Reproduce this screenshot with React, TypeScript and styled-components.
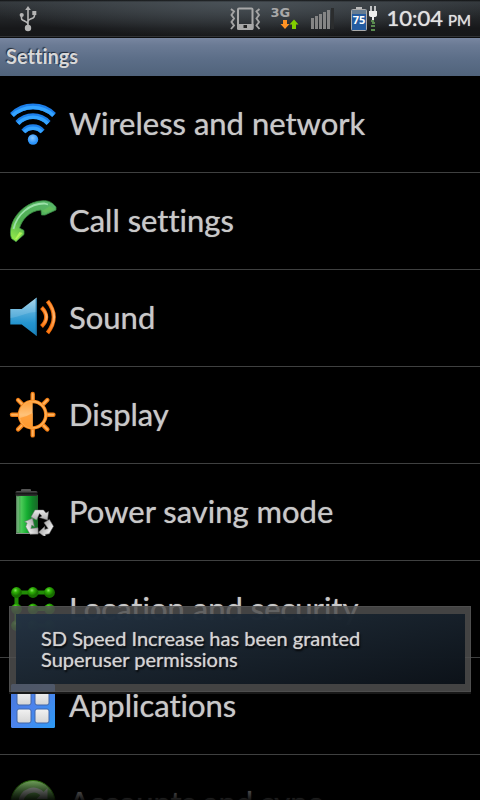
import React from "react";
import styled, { createGlobalStyle } from "styled-components";

const GlobalStyle = createGlobalStyle`
  * { box-sizing: border-box; }
  html, body { margin: 0; background: #000; }
  body {
    font-family: Lato, "Open Sans", sans-serif;
    font-variant-ligatures: none;
    color: #c9c9c9;
  }
`;

const Screen = styled.div`
  position: relative;
  display: flex;
  flex-direction: column;
  height: 100vh;
  overflow: hidden;
  background: #000;
`;

const StatusBar = styled.div`
  display: flex;
  flex: none;
  align-items: center;
  justify-content: space-between;
  height: 38px;
  padding: 0 9px 0 16px;
  background:
    linear-gradient(#0c0d0e, #0c0d0e) bottom / 100% 1px no-repeat,
    linear-gradient(#303234, #303234) 0 36px / 100% 1px no-repeat,
    linear-gradient(rgba(0, 0, 0, 0.75), rgba(0, 0, 0, 0)) top / 100% 2px no-repeat,
    radial-gradient(ellipse 56% 100% at 50% 0, #4b5359 0%, rgba(75, 83, 89, 0) 100%),
    linear-gradient(#34393d, #17181a 75%, #161718);
`;

const StatusIcons = styled.div`
  display: flex;
  align-items: center;
`;

const Network = styled.div`
  display: flex;
  flex-direction: column;
  width: 28px;
  height: 26px;
  margin: 0 11px 0 10px;
  color: #a8a8a8;
  font: bold 13px/13px "DejaVu Sans", sans-serif;

  svg { align-self: flex-end; }
`;

const Battery = styled.svg`
  margin: 0 10px 0 14px;
  font: bold 11px "Open Sans", sans-serif;
`;

const Clock = styled.time`
  color: #e2e2e2;
  font-size: 22px;
  line-height: 38px;
  text-shadow: 0 0 1px #ccc;
  white-space: nowrap;
`;

const Meridiem = styled.span`
  margin-left: 5px;
  font-size: 15px;
`;

const TitleBar = styled.h1`
  flex: none;
  height: 38px;
  margin: 0;
  padding: 0 6px;
  background: linear-gradient(#7886a0, #6a7a94 20%, #5c6e88 55%, #50637b);
  color: #d8d8d8;
  font-size: 20px;
  font-weight: 700;
  line-height: 37px;
  text-shadow: -1px -1px 1px #222b38;
`;

const List = styled.ul`
  flex: 1;
  min-height: 0;
  margin: 0;
  padding: 0;
  overflow: hidden;
  list-style: none;
`;

const Item = styled.li`
  border-bottom: 1px solid #3f4040;
`;

const ItemButton = styled.button`
  display: flex;
  align-items: center;
  gap: 12px;
  width: 100%;
  height: 96px;
  padding: 0 9px;
  border: 0;
  background: transparent;
  color: inherit;
  font: inherit;
  font-size: 31px;
  text-align: left;
  white-space: nowrap;
  cursor: pointer;

  svg { flex: none; }
`;

const ItemLabel = styled.span`
  padding-bottom: 2px;
  text-shadow: 0 0 1px #999;
`;

const BottomFade = styled.div`
  position: absolute;
  right: 0;
  bottom: 0;
  left: 0;
  height: 30px;
  background: linear-gradient(rgba(0, 0, 0, 0), rgba(0, 0, 0, 0.9));
  pointer-events: none;
`;

const Toast = styled.div`
  position: absolute;
  right: 9px;
  bottom: 108px;
  left: 9px;
  padding: 8px 6px 8px 7px;
  background: rgba(80, 80, 80, 0.84);
  box-shadow: inset 0 0 0 1px rgba(90, 90, 90, 0.5), 0 2px 0 #181818;
`;

const ToastBody = styled.p`
  margin: 0;
  padding: 14px 25px;
  background: linear-gradient(168deg, rgba(33, 49, 66, 0.92), rgba(23, 34, 45, 0.94) 45%, rgba(10, 16, 23, 0.96));
  color: #d4d4d4;
  font-size: 20px;
  line-height: 21px;
  text-shadow: 0 0 1px #aaa, 1px 2px 2px #000;
`;

const Icon = ({ children }: { children: React.ReactNode }) => (
  <svg width="48" height="48" viewBox="0 0 48 48" aria-hidden="true">
    {children}
  </svg>
);

const Gradient = ({ id, stops, flat }: { id: string; stops: string[]; flat?: boolean }) => (
  <linearGradient id={id} x1="0" y1="0" x2={flat ? "1" : "0"} y2={flat ? "0" : "1"}>
    {stops.map((color, i) => (
      <stop key={i} offset={i / (stops.length - 1)} stopColor={color} />
    ))}
  </linearGradient>
);

const WifiIcon = () => (
  <Icon>
    <defs>
      <radialGradient id="wifiDot" cx=".45" cy=".35">
        <stop offset="0" stopColor="#8cc8ff" />
        <stop offset="1" stopColor="#2b94fb" />
      </radialGradient>
    </defs>
    <g fill="none" stroke="#1c7eea" strokeWidth="5.600">
      <path d="M3 15A30 30 0 0 1 45 15" />
      <path d="M8.500 23A21 21 0 0 1 39.500 23" />
      <path d="M14.500 31.500A12.500 12.500 0 0 1 33.500 31.500" />
    </g>
    <g fill="none" stroke="#34a3ff" strokeWidth="3.500">
      <path d="M3.500 15.500A30 30 0 0 1 44.500 15.500" />
      <path d="M9 23.500A21 21 0 0 1 39 23.500" />
      <path d="M15 32A12.500 12.500 0 0 1 33 32" />
    </g>
    <circle cx="24" cy="39.500" r="5.200" fill="url(#wifiDot)" />
  </Icon>
);

const CallIcon = () => (
  <Icon>
    <defs>
      <linearGradient id="call" x1=".8" y1="0" x2=".1" y2="1">
        <stop offset="0" stopColor="#57b569" />
        <stop offset=".6" stopColor="#4fae50" />
        <stop offset="1" stopColor="#94ec4a" />
      </linearGradient>
    </defs>
    <path
      d="M7 44.700L15 37.500V33.500L10.500 31C13 23 20 14 32 13L32.500 18L36 18L47 13V10C43 5 39 3.500 34 3.700C20 4 7 15 3 27C1 33 1 38 2.500 41.500Z"
      fill="url(#call)"
      stroke="#3b8c43"
      strokeWidth=".8"
    />
    <path d="M4.500 32C8 17 21 6.500 35 6.500L39 7.500" fill="none" stroke="#9be0a8" strokeWidth="1.800" />
    <path d="M6 42L10.500 35L13.500 36L7.500 42.500Z" fill="#b2f25a" />
    <path d="M33 14L36.500 16L45.500 12L41 9Z" fill="#62bd5c" />
  </Icon>
);

const SoundIcon = () => (
  <Icon>
    <defs>
      <Gradient id="speaker" stops={["#9fd0e6", "#5ab0dc", "#2494cf", "#1a84bd"]} />
      <Gradient id="wave" stops={["#ff8a2c", "#ffb873", "#ff7810"]} />
    </defs>
    <path d="M1.300 15H12.700L27.700 3.500V42L12.700 30.500H1.300Z" fill="url(#speaker)" />
    <path d="M1.300 15H12.700L27.700 3.500V18C18 18 10 23 1.300 24Z" fill="#fff" opacity=".14" />
    <path d="M27.200 4.500V41.500" stroke="#1b6f9f" />
    <g fill="none" stroke="#ef6c08" strokeWidth="4">
      <path d="M32.500 13.500Q42 23 32.500 32.500" />
      <path d="M38.500 7Q51 23 38.500 39" />
    </g>
    <g fill="none" stroke="url(#wave)" strokeWidth="2.200">
      <path d="M33 14Q42 23 33 32" />
      <path d="M39 7.500Q51 23 39 38.500" />
    </g>
  </Icon>
);

const DisplayIcon = () => (
  <Icon>
    <defs>
      <Gradient id="sun" stops={["#ffa03a", "#ffc27a", "#ff9b2e"]} />
    </defs>
    {[0, 45, 90, 135, 180, 225, 270, 315].map((angle) => (
      <g key={angle} transform={`rotate(${angle} 23.700 23.700)`} strokeLinecap="round">
        <path d="M23.700 10V3" stroke="#f07c12" strokeWidth="4.400" />
        <path d="M23.700 10V3" stroke="#ffb25c" strokeWidth="2" />
      </g>
    ))}
    <circle cx="23.700" cy="23.700" r="13.200" fill="#000" stroke="#f58318" strokeWidth="3.500" />
    <circle cx="23.700" cy="23.700" r="13.200" fill="none" stroke="#ffae52" strokeWidth="1.800" />
    <path d="M23.700 10.500A13.200 13.200 0 0 0 23.700 37Z" fill="url(#sun)" />
    <path d="M11 27A13 13 0 0 0 23.700 37V22Q17 26 11 27Z" fill="#ff972c" opacity=".75" />
  </Icon>
);

const PowerIcon = () => (
  <Icon>
    <defs>
      <Gradient id="cell" flat stops={["#577c5b", "#49c956", "#16ae32", "#108528", "#1b6428"]} />
      <Gradient id="cap" stops={["#555", "#161616", "#333"]} />
      <Gradient id="arrow" stops={["#eee", "#aaa"]} />
    </defs>
    <rect x="12" y="1" width="10" height="4" rx="1" fill="#555" />
    <rect x="7" y="7" width="22" height="39" fill="url(#cell)" />
    <path d="M9 9V44" stroke="#91d69a" opacity=".7" />
    <path d="M7 45.500H29" stroke="#869088" />
    <rect x="6.500" y="3" width="22" height="5" rx="1.500" fill="url(#cap)" />
    {[0, 120, 240].map((angle) => (
      <path
        key={angle}
        transform={`translate(30.500 35.500) rotate(${angle})`}
        d="M-8.500 -6.500L-4.500 -13.500H4L6.500 -10.500L9 -12L8 -3.500L0 -6L2.500 -7.500L0 -10L-3 -3.500Z"
        fill="url(#arrow)"
        stroke="#777"
        strokeWidth=".5"
      />
    ))}
  </Icon>
);

const LocationIcon = () => (
  <Icon>
    <defs>
      <radialGradient id="node" cx=".4" cy=".3">
        <stop offset="0" stopColor="#86e55e" />
        <stop offset=".4" stopColor="#30b307" />
        <stop offset="1" stopColor="#176e00" />
      </radialGradient>
    </defs>
    <path d="M40.500 7.500H7.500V40.500M24 24H40.500M24 40.500H40.500" fill="none" stroke="#218d06" strokeWidth="4" />
    {[7.5, 24, 40.5].map((cy) =>
      [7.5, 24, 40.5].map((cx) => <circle key={`${cx}-${cy}`} cx={cx} cy={cy} r="5.400" fill="url(#node)" />)
    )}
  </Icon>
);

const ApplicationsIcon = () => (
  <Icon>
    <defs>
      <linearGradient id="apps" x1="0" y1="0" x2="1" y2="1">
        <stop offset="0" stopColor="#4676d8" />
        <stop offset=".5" stopColor="#4c83ec" />
        <stop offset="1" stopColor="#2c9bf5" />
      </linearGradient>
      <Gradient id="tile" stops={["#f2f2f2", "#d5d5d5"]} />
    </defs>
    <rect x="2" y="2" width="44" height="44" rx="1.500" fill="url(#apps)" />
    {[9, 27].map((y) =>
      [8, 26].map((x) => (
        <rect key={`${x}-${y}`} x={x} y={y} width="14" height="14" rx="2" fill="url(#tile)" stroke="#4167aa" />
      ))
    )}
  </Icon>
);

const SyncIcon = () => (
  <Icon>
    <defs>
      <Gradient id="sync" stops={["#a5ec85", "#549a45", "#256c16"]} />
    </defs>
    <circle cx="24" cy="23.500" r="22" fill="url(#sync)" stroke="#3d9b12" />
    <path d="M12 23A12.500 12.500 0 0 1 34 15.500M36 24A12.500 12.500 0 0 1 14 31.500" fill="none" stroke="#d5ddd3" strokeWidth="5" />
    <path d="M38.500 9V20H27.500ZM9.500 38V27H20.500Z" fill="#d5ddd3" />
  </Icon>
);

const UsbIcon = () => (
  <svg width="24" height="26" viewBox="0 0 24 26" aria-label="USB connected" role="img">
    <path
      d="M12 3V22M12 18.500Q12 16.500 9.500 15.500L6.500 14Q5.500 13.500 5.500 12V9M12 15.500Q12 14 14.500 13L17 12Q18.500 11 18.500 9.500V8"
      fill="none"
      stroke="#b5b5b5"
      strokeWidth="1.600"
    />
    <path d="M12 0L14.800 4H9.200Z" fill="#b5b5b5" />
    <circle cx="5.700" cy="9" r="2.100" fill="#b5b5b5" />
    <rect x="16.300" y="5" width="4" height="4" fill="#b5b5b5" />
    <circle cx="12" cy="22" r="3.200" fill="#b5b5b5" />
  </svg>
);

const VibrateIcon = () => (
  <svg width="31" height="24" viewBox="0 0 31 24" aria-label="Vibrate" role="img">
    <rect x="8" y="1.500" width="14.500" height="20" rx="1" fill="none" stroke="#a8a8a8" strokeWidth="2" />
    <path d="M7 17H23.500V21.500Q23.500 23 22 23H8.500Q7 23 7 21.500Z" fill="#a8a8a8" />
    <rect x="13.500" y="18" width="3.500" height="3" fill="#222" />
    <path
      d="M1 2L4 4.500L1.500 8L4 11.500L1.500 15L4 18.500L1 22M29.500 2L26.500 4.500L29 8L26.500 11.500L29 15L26.500 18.500L29.500 22"
      fill="none"
      stroke="#a4a4a4"
      strokeWidth="1.900"
    />
  </svg>
);

const DataArrows = () => (
  <svg width="19" height="11" viewBox="0 0 19 11" aria-hidden="true">
    <path d="M3 1H7V5H9.500L5 10L.5 5H3Z" fill="#ff9224" />
    <path d="M12 10H16V5.500H18.500L14 .5L9.500 5.500H12Z" fill="#82ce00" />
  </svg>
);

const SignalIcon = () => (
  <svg width="25" height="22" viewBox="0 0 25 22" aria-label="Signal strength" role="img">
    {[11, 9, 7, 5, 3].map((y, i) => (
      <rect key={y} x={1 + i * 4} y={y - 1} width="3" height={22 - y} fill="#858585" />
    ))}
    <rect x="21" y="0" width="3" height="21" fill="#2b2d2e" />
  </svg>
);

const BatteryIcon = () => (
  <Battery width="28" height="26" viewBox="0 0 28 26" aria-label="Battery 75%, charging" role="img">
    <rect x="7" y="1" width="6" height="3" fill="#bbb" />
    <rect x="2.500" y="3.500" width="15" height="21" rx="1" fill="#245ba0" stroke="#aaa" />
    <rect x="3" y="4" width="14" height="4" fill="#667c91" />
    <text x="10" y="18" fill="#fff" textAnchor="middle">75</text>
    <path d="M22 0V5M26 0V5" stroke="#eee" strokeWidth="1.500" />
    <path d="M20 5H28V9Q28 11 25 11V14H23V11Q20 11 20 9Z" fill="#eee" />
    <path d="M22 15H24V17H26M22 20H26M22 24H26" fill="none" stroke="#5a8a50" strokeWidth="2" />
  </Battery>
);

const settings = [
  { label: "Wireless and network", Glyph: WifiIcon },
  { label: "Call settings", Glyph: CallIcon },
  { label: "Sound", Glyph: SoundIcon },
  { label: "Display", Glyph: DisplayIcon },
  { label: "Power saving mode", Glyph: PowerIcon },
  { label: "Location and security", Glyph: LocationIcon },
  { label: "Applications", Glyph: ApplicationsIcon },
  { label: "Accounts and sync", Glyph: SyncIcon },
];

export default function App() {
  return (
    <Screen>
      <GlobalStyle />
      <StatusBar>
        <UsbIcon />
        <StatusIcons>
          <VibrateIcon />
          <Network>
            3G
            <DataArrows />
          </Network>
          <SignalIcon />
          <BatteryIcon />
          <Clock>
            10:04<Meridiem>PM</Meridiem>
          </Clock>
        </StatusIcons>
      </StatusBar>
      <TitleBar>Settings</TitleBar>
      <List>
        {settings.map(({ label, Glyph }) => (
          <Item key={label}>
            <ItemButton type="button">
              <Glyph />
              <ItemLabel>{label}</ItemLabel>
            </ItemButton>
          </Item>
        ))}
      </List>
      <BottomFade />
      <Toast role="status">
        <ToastBody>SD Speed Increase has been granted Superuser permissions</ToastBody>
      </Toast>
    </Screen>
  );
}
